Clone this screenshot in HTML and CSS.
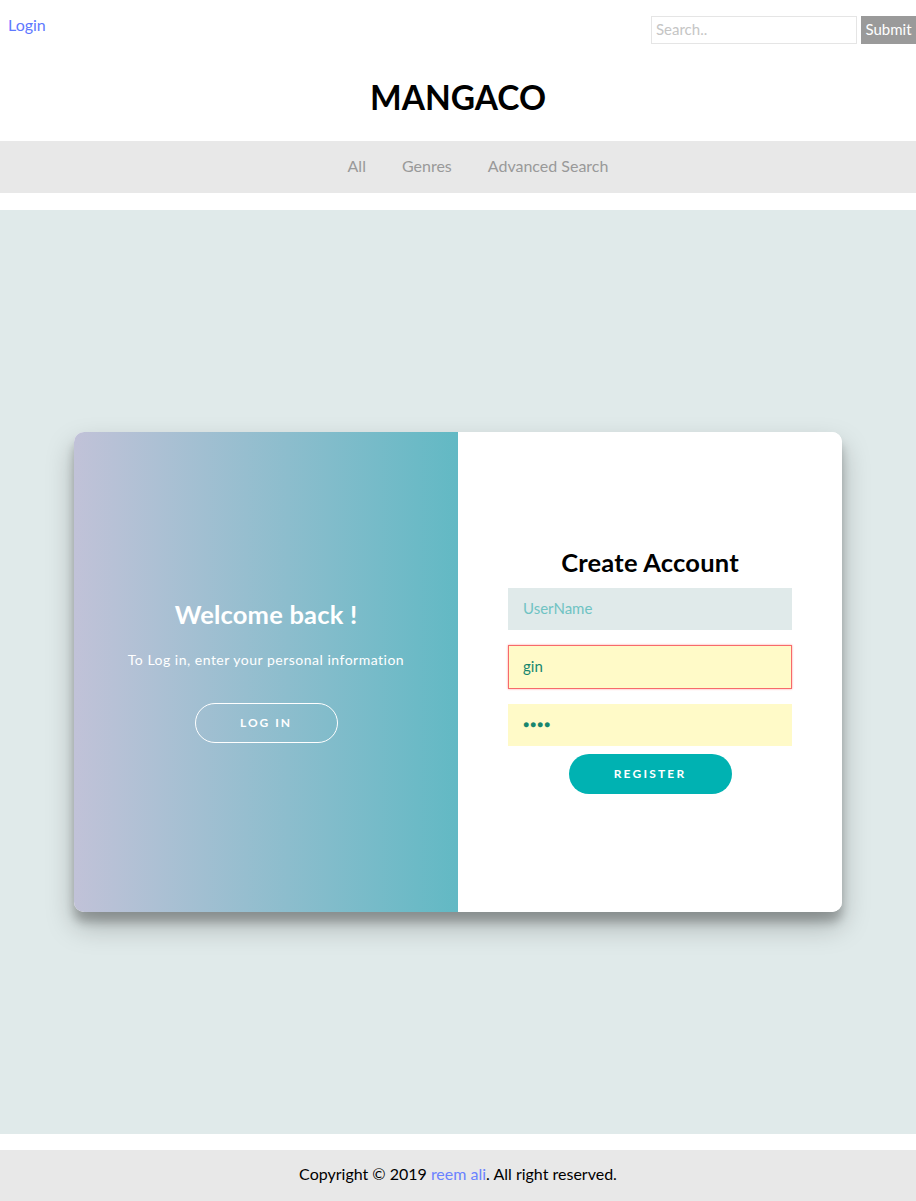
FILE: index.html
```html
<!DOCTYPE html>
<html>
<head>
<meta charset="utf-8">
<title>MANGACO</title>
<link rel="stylesheet" href="styles.css">
</head>
<body>
<header class="topbar">
  <a class="login-link" href="#">Login</a>
  <form class="search">
    <input class="search-input" type="text" placeholder="Search..">
    <button class="search-btn" type="button">Submit</button>
  </form>
</header>
<div class="brand">MANGACO</div>
<nav class="nav">
  <a href="#">All</a>
  <a href="#">Genres</a>
  <a href="#">Advanced Search</a>
</nav>
<main class="main">
  <div class="card">
    <div class="panel panel-left">
      <h1 class="panel-title light">Welcome back !</h1>
      <p class="panel-text">To Log in, enter your personal information</p>
      <button class="ghost-btn" type="button">Log In</button>
    </div>
    <div class="panel panel-right">
      <form class="form">
        <h1 class="panel-title">Create Account</h1>
        <input class="field" type="text" placeholder="UserName">
        <input class="field filled invalid" type="text" value="gin">
        <input class="field filled dots" type="text" value="●●●●">
        <button class="solid-btn" type="button">Register</button>
      </form>
    </div>
  </div>
</main>
<footer class="footer">
  Copyright © 2019 <a href="#">reem ali</a>. All right reserved.
</footer>
</body>
</html>
```

FILE: styles.css
```css
* { box-sizing: border-box; }
html, body { margin: 0; padding: 0; }
body {
  font-family: Lato, "Open Sans", sans-serif;
  background: #fff;
  color: #000;
}
.topbar {
  display: flex;
  justify-content: space-between;
  align-items: flex-start;
  padding: 16px 0 0 8px;
  height: 44px;
}
.login-link {
  color: #5f79ff;
  text-decoration: none;
  font-size: 16px;
  line-height: 17px;
}
.search {
  display: flex;
  gap: 4px;
  margin: 0;
}
.search-input {
  width: 206px;
  height: 28px;
  border: 1px solid #e5e5e5;
  padding: 0 4px 2px;
  font-family: Lato, sans-serif;
  font-size: 15px;
  outline: none;
}
.search-input::placeholder { color: #c5c5c5; }
.search-btn {
  width: 55px;
  height: 28px;
  border: none;
  background: #9a9a9a;
  color: #fff;
  font-family: Lato, sans-serif;
  font-size: 15px;
  padding: 0 0 2px;
}
.brand {
  text-align: center;
  font-weight: bold;
  font-size: 33.5px;
  line-height: 44px;
  padding: 31px 0 22px;
}
.nav {
  background: #e8e8e8;
  height: 52px;
  display: flex;
  justify-content: center;
  align-items: center;
  gap: 36px;
  padding: 0 0 3px 40px;
}
.nav a {
  color: #999;
  text-decoration: none;
  font-size: 16px;
}
.main {
  margin-top: 17px;
  background: #e0eaea;
  height: 924px;
  display: flex;
  justify-content: center;
  align-items: center;
}
.card {
  width: 768px;
  height: 480px;
  display: flex;
  border-radius: 10px;
  overflow: hidden;
  background: #fff;
  box-shadow: 0 14px 28px rgba(0,0,0,0.25), 0 10px 10px rgba(0,0,0,0.22);
}
.panel {
  width: 384px;
  height: 100%;
  display: flex;
  flex-direction: column;
  align-items: center;
  justify-content: center;
  text-align: center;
}
.panel-left {
  background: linear-gradient(to right, #c1c2d8, #62b9c4);
  color: #fff;
  padding: 0 30px 3px;
}
.panel-right {
  background: #fff;
  padding: 0 50px 4px;
}
.panel-title {
  margin: 0;
  font-size: 25.5px;
  line-height: 30px;
  font-weight: bold;
  letter-spacing: 0.2px;
}
.panel-title.light { color: #fff; }
.panel-text {
  font-size: 14px;
  line-height: 20px;
  font-weight: 400;
  letter-spacing: 0.5px;
  margin: 21px 0 33px;
}
.ghost-btn {
  width: 143px;
  height: 40px;
  border-radius: 20px;
  border: 1px solid #fff;
  background: transparent;
  color: #fff;
  font-family: Lato, sans-serif;
  font-size: 12px;
  font-weight: bold;
  letter-spacing: 2px;
  text-transform: uppercase;
}
.form {
  width: 100%;
  display: flex;
  flex-direction: column;
  align-items: center;
  margin: 0;
}
.form .panel-title { margin-bottom: 11px; }
.field {
  width: 100%;
  height: 42px;
  border: none;
  background: #e0eaea;
  padding: 0 15px 2px;
  margin-bottom: 15px;
  font-family: Lato, sans-serif;
  font-size: 15px;
  color: #17866f;
  outline: none;
}
.field::placeholder { color: #6fc3c3; }
.field.filled { background: #fffac8; }
.field.invalid {
  height: 44px;
  border: 1px solid #f76a6a;
  box-shadow: 0 0 2px #f99;
  padding: 0 14px 2px;
}
.field.dots {
  margin-bottom: 8px;
  font-size: 10px;
  letter-spacing: 1px;
}
.solid-btn {
  width: 163px;
  height: 40px;
  border-radius: 20px;
  border: none;
  background: #00b2b2;
  color: #fff;
  font-family: Lato, sans-serif;
  font-size: 12px;
  font-weight: bold;
  letter-spacing: 2.2px;
  text-transform: uppercase;
}
.footer {
  margin-top: 16px;
  background: #e8e8e8;
  height: 51px;
  display: flex;
  justify-content: center;
  align-items: center;
  font-size: 16px;
  padding-bottom: 4px;
}
.footer a {
  color: #6a82ff;
  text-decoration: none;
  margin-left: 4px;
}
```
